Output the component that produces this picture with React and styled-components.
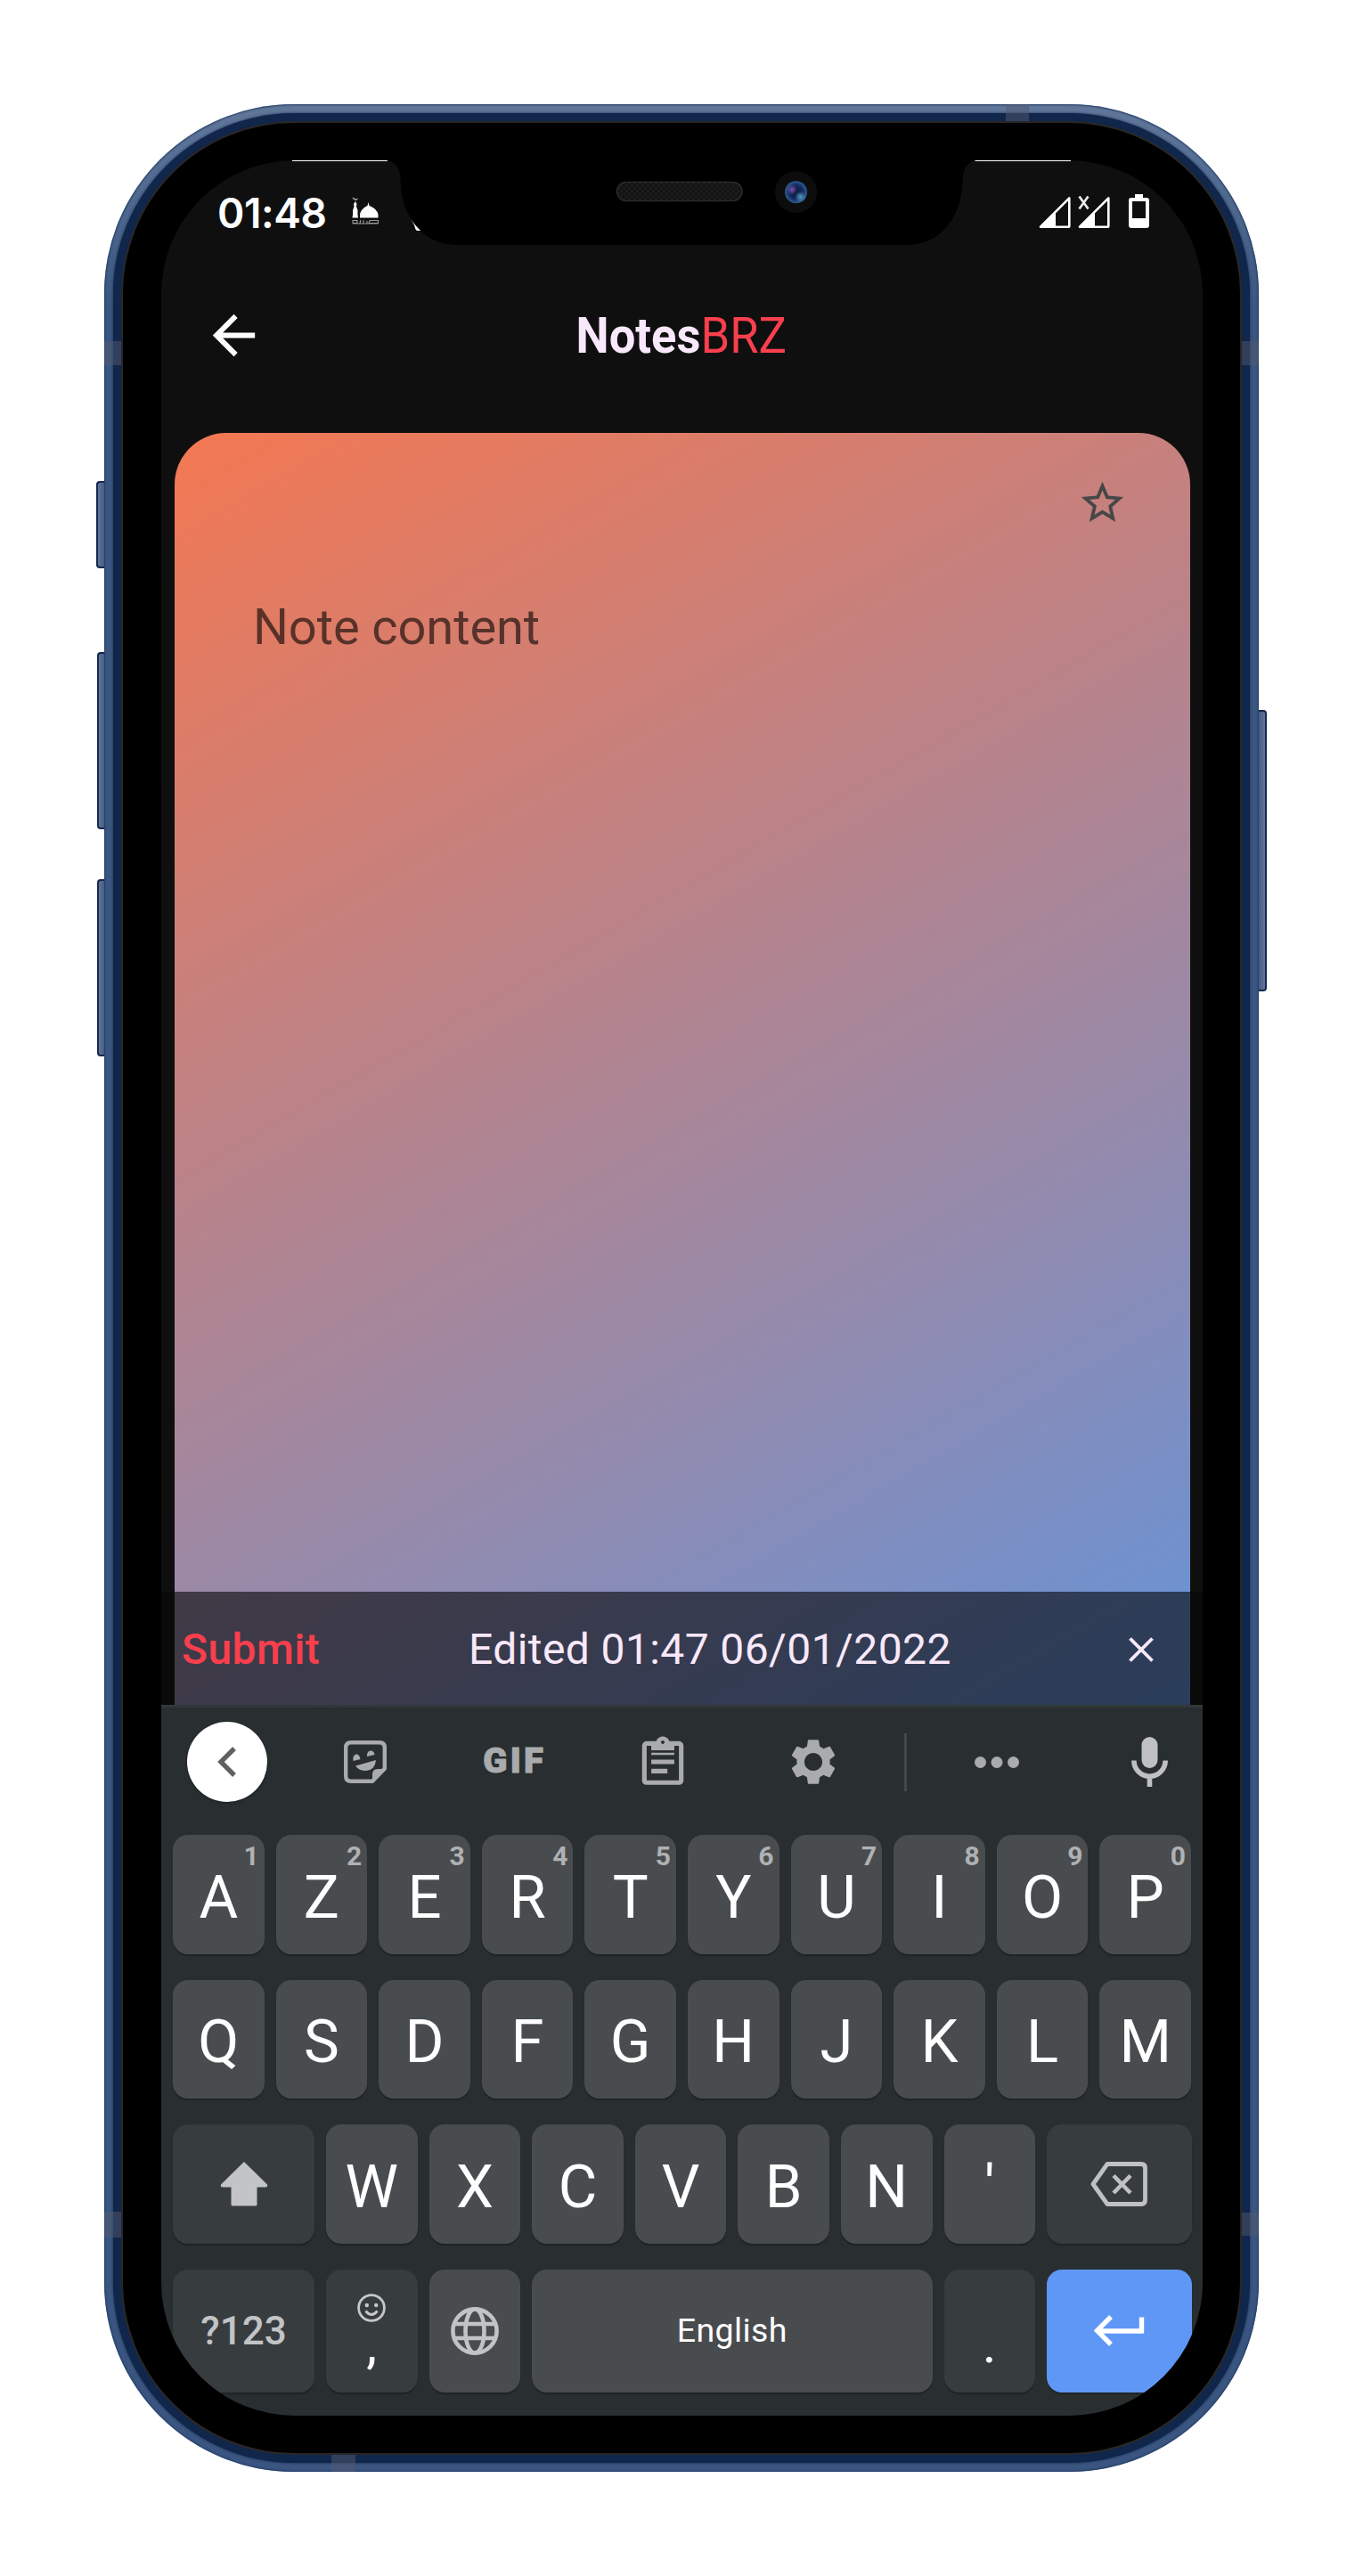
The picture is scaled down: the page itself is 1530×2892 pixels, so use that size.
import React from "react";
import styled, { createGlobalStyle } from "styled-components";

const Global = createGlobalStyle`
  body { margin: 0; background: #fff; font-family: Roboto, "Liberation Sans", sans-serif; }
  * { box-sizing: border-box; }
  svg { display: block; overflow: visible; flex: none; }
`;

const Page = styled.main`
  width: 1530px;
  height: 2892px;
  padding: 117px;
  background: #fff;
  overflow: hidden;
`;

const Phone = styled.div`
  position: relative;
  width: 1296px;
  height: 2658px;
  padding: 10px;
  border-radius: 213px;
  background: linear-gradient(#5f7699 0, #5f7699 15px, #3a5680 230px, #3a5680 100%);
  box-shadow: inset 0 0 2px 1px #223c66;
`;

const Rim = styled.div`
  height: 100%;
  padding: 9px;
  border-radius: 203px;
  background: #10264a;
  box-shadow: 0 0 3px 0 #14294d;
`;

const Bezel = styled.div`
  height: 100%;
  padding: 42px 42px 42px 43px;
  border: 2px solid #2a2827;
  border-radius: 194px;
  background: #000;
`;

const Screen = styled.div`
  display: flex;
  flex-direction: column;
  width: 1169px;
  height: 2532px;
  border-radius: 150px;
  background: #0f0f0f;
  overflow: hidden;
`;

const SideButton = styled.div`
  position: absolute;
  ${(p) => (p.$right ? "left: 1296px;" : `left: -${p.$w}px;`)}
  top: ${(p) => p.$top}px;
  width: ${(p) => p.$w}px;
  height: ${(p) => p.$h}px;
  border: 2px solid #16294d;
  ${(p) => (p.$right ? "border-left: 0; border-radius: 0 4px 4px 0;" : "border-right: 0; border-radius: 4px 0 0 4px;")}
  background: linear-gradient(${(p) => (p.$right ? "to left" : "to right")}, #60769a, #455c83);
`;

const Band = styled.div`
  position: absolute;
  left: ${(p) => p.$x}px;
  top: ${(p) => p.$y}px;
  width: ${(p) => p.$w}px;
  height: ${(p) => p.$h}px;
  background: rgba(82, 88, 112, 0.5);
`;

const NotchLayer = styled.div`
  position: absolute;
  left: 64px;
  top: 63px;
`;

const StatusBar = styled.header`
  display: flex;
  flex: none;
  height: 120px;
  padding: 32px 60px 0 63px;
  color: #fff;
`;

const Clock = styled.div`
  height: 54px;
  width: 150px;
  font: 600 46px/54px Inter, Roboto, sans-serif;
  letter-spacing: -0.4px;
  white-space: nowrap;
`;

const StatusIcon = styled.div`
  padding: ${(p) => p.$pad};
`;

const Signals = styled.div`
  display: flex;
  gap: 8px;
  margin-left: auto;
  padding-top: 6px;
`;

const TitleBar = styled.div`
  display: grid;
  flex: none;
  grid-template-columns: 200px 1fr 200px;
  align-items: center;
  height: 153px;
  padding: 0 0 0 46px;
`;

const Title = styled.h1`
  margin: 0;
  justify-self: center;
  font-size: 55px;
  line-height: 64px;
  font-weight: 700;
  color: #f9e8fb;
  transform: translateX(-24px) scaleX(0.955);
  span { font-weight: 400; color: #f93f4d; }
`;

const Editor = styled.div`
  flex: none;
  display: flex;
  height: 1428px;
  margin-top: 33px;
`;

const Gutter = styled.div`
  flex: none;
  width: ${(p) => p.$w}px;
  background: linear-gradient(#0f0f0f 1301px, #0a0a0a 1301px);
`;

const Note = styled.section`
  display: flex;
  flex: none;
  flex-direction: column;
  width: 1140px;
  height: 1428px;
  border-radius: 58px 58px 0 0;
  background: linear-gradient(150deg, #f47852 0, #5b95e2 1940px);
`;

const NoteBody = styled.div`
  height: 1301px;
  padding: 50px 70px 0 88px;
`;

const StarRow = styled.div`
  display: flex;
  justify-content: flex-end;
  color: #474747;
`;

const Placeholder = styled.p`
  margin: 78px 0 0;
  font-size: 56px;
  line-height: 66px;
  letter-spacing: -0.1px;
  color: rgba(0, 0, 0, 0.6);
`;

const NoteFooter = styled.footer`
  display: flex;
  align-items: center;
  height: 127px;
  padding: 2px 41px 0 8px;
  background: rgba(0, 0, 0, 0.58);
  font-size: 48px;
  letter-spacing: 0.4px;
  color: #f9e8f9;
  white-space: nowrap;
`;

const Submit = styled.span`
  width: 322px;
  font-weight: 500;
  color: #f93f4d;
`;

const Edited = styled.span`
  margin-right: auto;
`;

const Keyboard = styled.section`
  flex: none;
  height: 798px;
  border-top: 3px solid #33383b;
  background: #292e31;
`;

const Tools = styled.div`
  display: grid;
  grid-template-columns: 148px 162px 170px 166px 171px 36px 170px 173px;
  align-items: center;
  justify-items: center;
  height: 122px;
  color: #a9abad;
`;

const Round = styled.div`
  display: grid;
  place-items: center;
  width: 90px;
  height: 90px;
  border-radius: 50%;
  background: #fff;
  box-shadow: 0 1px 3px rgba(0, 0, 0, 0.4);
`;

const Divider = styled.div`
  width: 3px;
  height: 65px;
  background: #45484c;
`;

const Keys = styled.div`
  display: flex;
  flex-direction: column;
  gap: 29px;
  padding: 21px 13px 0;
`;

const Row = styled.div`
  display: grid;
  gap: 13px;
  width: 1143px;
  height: ${(p) => p.$h || 133.5}px;
  grid-template-columns: ${(p) => p.$cols};
`;

const Key = styled.div`
  position: relative;
  display: flex;
  flex-direction: column;
  align-items: center;
  justify-content: center;
  padding-top: ${(p) => p.$pad || 0}px;
  border-radius: 17px;
  background: ${(p) => ({ dark: "#373c3f", blue: "#5f97f6" }[p.$tone] || "#494c4e")};
  box-shadow: 0 2px 1px rgba(20, 22, 25, 0.45);
  font-size: ${(p) => p.$size || 67}px;
  font-weight: ${(p) => p.$weight || 400};
  letter-spacing: ${(p) => p.$track || 0}px;
  line-height: 1;
  color: ${(p) => p.$color || "#fff"};
`;

const Hint = styled.span`
  position: absolute;
  top: 7px;
  right: 6px;
  font-size: 30px;
  line-height: 34px;
  font-weight: 700;
  color: #afb1b3;
`;

const Mark = styled.span`
  height: 54px;
  font-size: 60px;
  line-height: 54px;
  margin-top: ${(p) => p.$mt}px;
`;

const Mosque = () => (
  <svg width="30" height="30" viewBox="0 0 30 30" fill="#fff">
    <path d="M4 4l1.500 3-.5 3 1.500 4v5l.5 3.500H.5L1 19v-5l1.500-4L2 7zM18.500 5l1 4c5 2 9.500 5.500 10 10v3.500H9V19c.5-4 4-8 8.500-10z" />
    <path d="M1 0l3 2.500L6.500 1" fill="none" stroke="#bbb" strokeWidth="1.200" />
    <path d="M1 25.500h5v3H1zM10 25l-1 3.500M13 25v3.500M17 26v2.500M20 25.500h9.500v3H19zM1 29h28" fill="none" stroke="#999" strokeWidth="1.100" />
  </svg>
);

const Signal = ({ off }) => (
  <svg width="36" height="36" viewBox="0 0 36 36">
    <path d="M2 34.700L34.300 2.400V34Q34.300 34.700 33.600 34.700Z" fill="none" stroke="#fff" strokeWidth="2.600" strokeLinejoin="round" />
    <path d="M2 35L19 18V35Z" fill="#fff" />
    {off && <path d="M1.500 0.500L11.500 14.500M11.500 0.500L1.500 14.500" stroke="#e8e8e8" strokeWidth="2.700" />}
  </svg>
);

const Battery = () => (
  <svg width="23" height="38" viewBox="0 0 23 38">
    <path d="M7 0h9v4h4q3 0 3 3v28q0 3-3 3H3q-3 0-3-3V7q0-3 3-3h4zM4 8v19h15V8z" fill="#fff" fillRule="evenodd" />
  </svg>
);

const BackArrow = () => (
  <svg width="71" height="71" viewBox="0 0 24 24" fill="#fff">
    <path d="M20 11H7.830l5.590-5.590L12 4l-8 8 8 8 1.410-1.410L7.830 13H20v-2z" />
  </svg>
);

const Star = () => (
  <svg width="57" height="57" viewBox="0 0 24 24" fill="currentColor">
    <path d="M22 9.240l-7.190-.62L12 2 9.190 8.630 2 9.240l5.460 4.730L5.820 21 12 17.270 18.180 21l-1.630-7.030L22 9.240zM12 15.400l-3.760 2.270 1-4.280-3.320-2.880 4.380-.38L12 6.100l1.710 4.040 4.380.38-3.320 2.880 1 4.280L12 15.400z" />
  </svg>
);

const Close = () => (
  <svg width="28" height="28" viewBox="0 0 28 28">
    <path d="M1.500 1.500L26.500 26.500M26.500 1.500L1.500 26.500" stroke="#f9e8f9" strokeWidth="3.800" />
  </svg>
);

const Chevron = () => (
  <svg width="22" height="34" viewBox="0 0 22 34">
    <path d="M19 2L4 17L19 32" fill="none" stroke="#616161" strokeWidth="5.400" />
  </svg>
);

const Sticker = () => (
  <svg width="48" height="48" viewBox="0 0 48 48" fill="currentColor">
    <path d="M8 2.200h32q5.800 0 5.800 5.800v23.500L32 45.800H8q-5.800 0-5.800-5.800V8Q2.200 2.200 8 2.200z" fill="none" stroke="currentColor" strokeWidth="4.400" />
    <path d="M32 46V38q0-6 6-6h8z" />
    <path d="M13 28.500L36 22q-1 11-11 12-8 0-12-5.500z" />
    <path d="M10.500 23q-1-6 3-7.500 4-.5 5 5.500zM26 18q-.5-5.500 3.500-6.500 4.500-.5 5 4.500z" />
  </svg>
);

const GifMark = styled.span`
  font: 900 38px/38px Roboto, sans-serif;
  letter-spacing: 3px;
  transform: translate(2px, -1px) scaleX(1.05);
  -webkit-text-stroke: 1px #a9abad;
`;

const Clipboard = () => (
  <svg width="62" height="62" viewBox="0 0 24 24" fill="currentColor">
    <path d="M7 15h7v2H7zm0-4h10v2H7zm0-4h10v2H7zM19 3h-4.180C14.400 1.840 13.300 1 12 1c-1.300 0-2.400.84-2.820 2H5c-1.100 0-2 .9-2 2v15c0 1.100.9 2 2 2h14c1.100 0 2-.9 2-2V5c0-1.100-.9-2-2-2zm-7-.25c.41 0 .75.34.75.75s-.34.75-.75.75-.75-.34-.75-.75.34-.75.75-.75zM19 20H5V5h2v3h10V5h2v15z" />
  </svg>
);

const Gear = () => (
  <svg width="62" height="62" viewBox="0 0 24 24" fill="currentColor">
    <path d="M19.140 12.940c.04-.3.060-.61.060-.94 0-.32-.02-.64-.07-.94l2.030-1.580c.18-.14.23-.41.120-.61l-1.920-3.320c-.12-.22-.37-.29-.59-.22l-2.390.96c-.5-.38-1.030-.7-1.620-.94l-.36-2.540c-.04-.24-.24-.41-.48-.41h-3.840c-.24 0-.43.17-.47.41l-.36 2.540c-.59.24-1.130.57-1.620.94l-2.390-.96c-.22-.08-.47 0-.59.22L2.740 8.870c-.12.21-.08.47.12.61l2.030 1.580c-.05.3-.09.63-.09.94s.02.64.07.94l-2.030 1.580c-.18.14-.23.41-.12.61l1.920 3.320c.12.22.37.29.59.22l2.390-.96c.5.38 1.030.7 1.620.94l.36 2.540c.05.24.24.41.48.41h3.840c.24 0 .44-.17.47-.41l.36-2.540c.59-.24 1.130-.56 1.620-.94l2.390.96c.22.08.47 0 .59-.22l1.920-3.320c.12-.22.070-.47-.12-.61l-2.010-1.580zM12 15.900c-2.150 0-3.900-1.750-3.900-3.900s1.750-3.900 3.900-3.900 3.900 1.750 3.900 3.900-1.750 3.900-3.900 3.900z" />
  </svg>
);

const Dots = () => (
  <svg width="50" height="13" viewBox="0 0 50 13" fill="currentColor">
    <circle cx="6.500" cy="6.500" r="6.500" /><circle cx="25" cy="6.500" r="6.500" /><circle cx="43.500" cy="6.500" r="6.500" />
  </svg>
);

const Mic = () => (
  <svg width="41" height="56" viewBox="0 0 41 56" fill="#bfc0c2">
    <rect x="11.500" y="0" width="18" height="35" rx="9" />
    <path d="M2.800 26.500A17.700 17.700 0 0 0 38.200 26.500M20.500 44V56" fill="none" stroke="#bfc0c2" strokeWidth="5.600" />
  </svg>
);

const Shift = () => (
  <svg width="54" height="50" viewBox="0 0 54 50" fill="#c2c4c6">
    <path d="M27 0L53 25.500Q54 28.500 51 28.500H41.500V48Q41.500 49.500 40 49.500H14Q12.500 49.500 12.500 48V28.500H3Q0 28.500 1 25.500z" />
  </svg>
);

const Backspace = () => (
  <svg width="64" height="50" viewBox="0 0 64 50" fill="none" stroke="#c0c1c3" strokeLinejoin="round">
    <path d="M19 2.500H57Q61.500 2.500 61.500 7V43Q61.500 47.500 57 47.500H19L3 25z" strokeWidth="4.800" />
    <path d="M26 15.500L45 35M45 15.500L26 35" strokeWidth="4.600" />
  </svg>
);

const Smile = () => (
  <svg width="32" height="32" viewBox="0 0 32 32" fill="none" stroke="#c6c7c9" strokeWidth="2.800">
    <circle cx="16" cy="16" r="14.400" />
    <circle cx="10.800" cy="13" r="2.200" fill="#c6c7c9" stroke="none" />
    <circle cx="21.200" cy="13" r="2.200" fill="#c6c7c9" stroke="none" />
    <path d="M9.500 19.500Q16 27.500 22.500 19.500" />
  </svg>
);

const Globe = () => (
  <svg width="54" height="54" viewBox="0 0 54 54" fill="none" stroke="#c2c3c5" strokeWidth="4.600">
    <circle cx="27" cy="27" r="24.600" />
    <ellipse cx="27" cy="27" rx="10.500" ry="24.600" />
    <path d="M4 19H50M4 35H50" />
  </svg>
);

const Enter = () => (
  <svg width="57" height="35" viewBox="0 0 57 35" fill="none" stroke="#fff" strokeWidth="5.400">
    <path d="M53.500 2.500V18H4M19 2L3.500 17.500L19 33" />
  </svg>
);

const Notch = () => (
  <svg width="1169" height="100" viewBox="181 180 1169 100">
    <defs>
      <pattern id="mesh" width="6" height="6" patternUnits="userSpaceOnUse">
        <rect width="6" height="6" fill="#1c1c1c" />
        <path d="M0 0h3v3H0zM3 3h3v3H3z" fill="#121212" />
      </pattern>
      <radialGradient id="lens">
        <stop offset="0" stopColor="#0b1436" /><stop offset="0.6" stopColor="#16285a" /><stop offset="1" stopColor="#2b5e94" />
      </radialGradient>
      <radialGradient id="violet"><stop offset="0" stopColor="#7a4fb0" /><stop offset="1" stopColor="#7a4fb0" stopOpacity="0" /></radialGradient>
      <radialGradient id="cyan"><stop offset="0" stopColor="#4f9cc4" /><stop offset="1" stopColor="#4f9cc4" stopOpacity="0" /></radialGradient>
    </defs>
    <path d="M328 180.500H435M1094 180.500H1202" stroke="#fff" strokeWidth="1" />
    <path d="M457 236L476 259H468Q466 258 465.500 254Z" fill="#fff" />
    <path d="M434 180C445 182 449.500 190 449.700 204C450 240 473 275 513 275H1018C1058 275 1080 240 1080.500 204C1080.700 190 1085 182 1096 180V176H434Z" fill="#000" />
    <rect x="692.500" y="204.500" width="140.500" height="21" rx="10.500" fill="url(#mesh)" stroke="#2b2b2b" strokeWidth="1.500" />
    <circle cx="893.500" cy="215.700" r="23.500" fill="#0c0c0c" />
    <circle cx="893.500" cy="215.700" r="12.500" fill="url(#lens)" />
    <circle cx="889" cy="213" r="6" fill="url(#violet)" />
    <circle cx="898.500" cy="221" r="6.500" fill="url(#cyan)" />
  </svg>
);

const TEN = "repeat(10, 102.6px)";
const THIRD = "159px repeat(7, 102.6px) 162.500px";
const FOURTH = "159px 102.500px 102.500px 449.500px 102.500px 162.500px";

export default function App() {
  return (
    <Page>
      <Global />
      <Phone>
        <SideButton $top={423} $h={98} $w={9} />
        <SideButton $top={615} $h={199} $w={8} />
        <SideButton $top={870} $h={199} $w={8} />
        <SideButton $right $top={680} $h={316} $w={9} />
        <Rim>
          <Bezel>
            <Screen>
              <StatusBar>
                <Clock>01:48</Clock>
                <StatusIcon $pad="10px 0 0 1px"><Mosque /></StatusIcon>
                <Signals>
                  <StatusIcon $pad="2px 0 0"><Signal /></StatusIcon>
                  <StatusIcon $pad="2px 0 0"><Signal off /></StatusIcon>
                  <StatusIcon $pad="0 0 0 13px"><Battery /></StatusIcon>
                </Signals>
              </StatusBar>
              <TitleBar>
                <BackArrow />
                <Title>Notes<span>BRZ</span></Title>
              </TitleBar>
              <Editor>
                <Gutter $w={15} />
                <Note>
                  <NoteBody>
                    <StarRow><Star /></StarRow>
                    <Placeholder>Note content</Placeholder>
                  </NoteBody>
                  <NoteFooter>
                    <Submit>Submit</Submit>
                    <Edited>Edited 01:47 06/01/2022</Edited>
                    <Close />
                  </NoteFooter>
                </Note>
                <Gutter $w={14} />
              </Editor>
              <Keyboard>
                <Tools>
                  <Round><Chevron /></Round>
                  <Sticker />
                  <GifMark>GIF</GifMark>
                  <Clipboard />
                  <Gear />
                  <Divider />
                  <Dots />
                  <Mic />
                </Tools>
                <Keys>
                  <Row $cols={TEN}>
                    {[..."AZERTYUIOP"].map((c, i) => (
                      <Key key={c} $pad={7}>{c}<Hint>{(i + 1) % 10}</Hint></Key>
                    ))}
                  </Row>
                  <Row $cols={TEN}>
                    {[..."QSDFGHJKLM"].map((c) => <Key key={c} $pad={7}>{c}</Key>)}
                  </Row>
                  <Row $cols={THIRD}>
                    <Key $tone="dark"><Shift /></Key>
                    {[..."WXCVBN'"].map((c) => <Key key={c} $pad={7}>{c}</Key>)}
                    <Key $tone="dark"><Backspace /></Key>
                  </Row>
                  <Row $cols={FOURTH} $h={138}>
                    <Key $tone="dark" $size={44} $weight={500} $color="#c2c3c5">?123</Key>
                    <Key $tone="dark"><Smile /><Mark $mt={-2}>,</Mark></Key>
                    <Key><Globe /></Key>
                    <Key $size={37.5} $track={0.4} $pad={1}>English</Key>
                    <Key $tone="dark"><Mark $mt={30}>.</Mark></Key>
                    <Key $tone="blue"><Enter /></Key>
                  </Row>
                </Keys>
              </Keyboard>
            </Screen>
          </Bezel>
        </Rim>
        <NotchLayer><Notch /></NotchLayer>
        <Band $x={1012} $y={0} $w={26} $h={19} />
        <Band $x={0} $y={266} $w={19} $h={27} />
        <Band $x={1277} $y={266} $w={19} $h={27} />
        <Band $x={0} $y={2366} $w={19} $h={29} />
        <Band $x={1277} $y={2367} $w={19} $h={26} />
        <Band $x={255} $y={2639} $w={27} $h={19} />
      </Phone>
    </Page>
  );
}
